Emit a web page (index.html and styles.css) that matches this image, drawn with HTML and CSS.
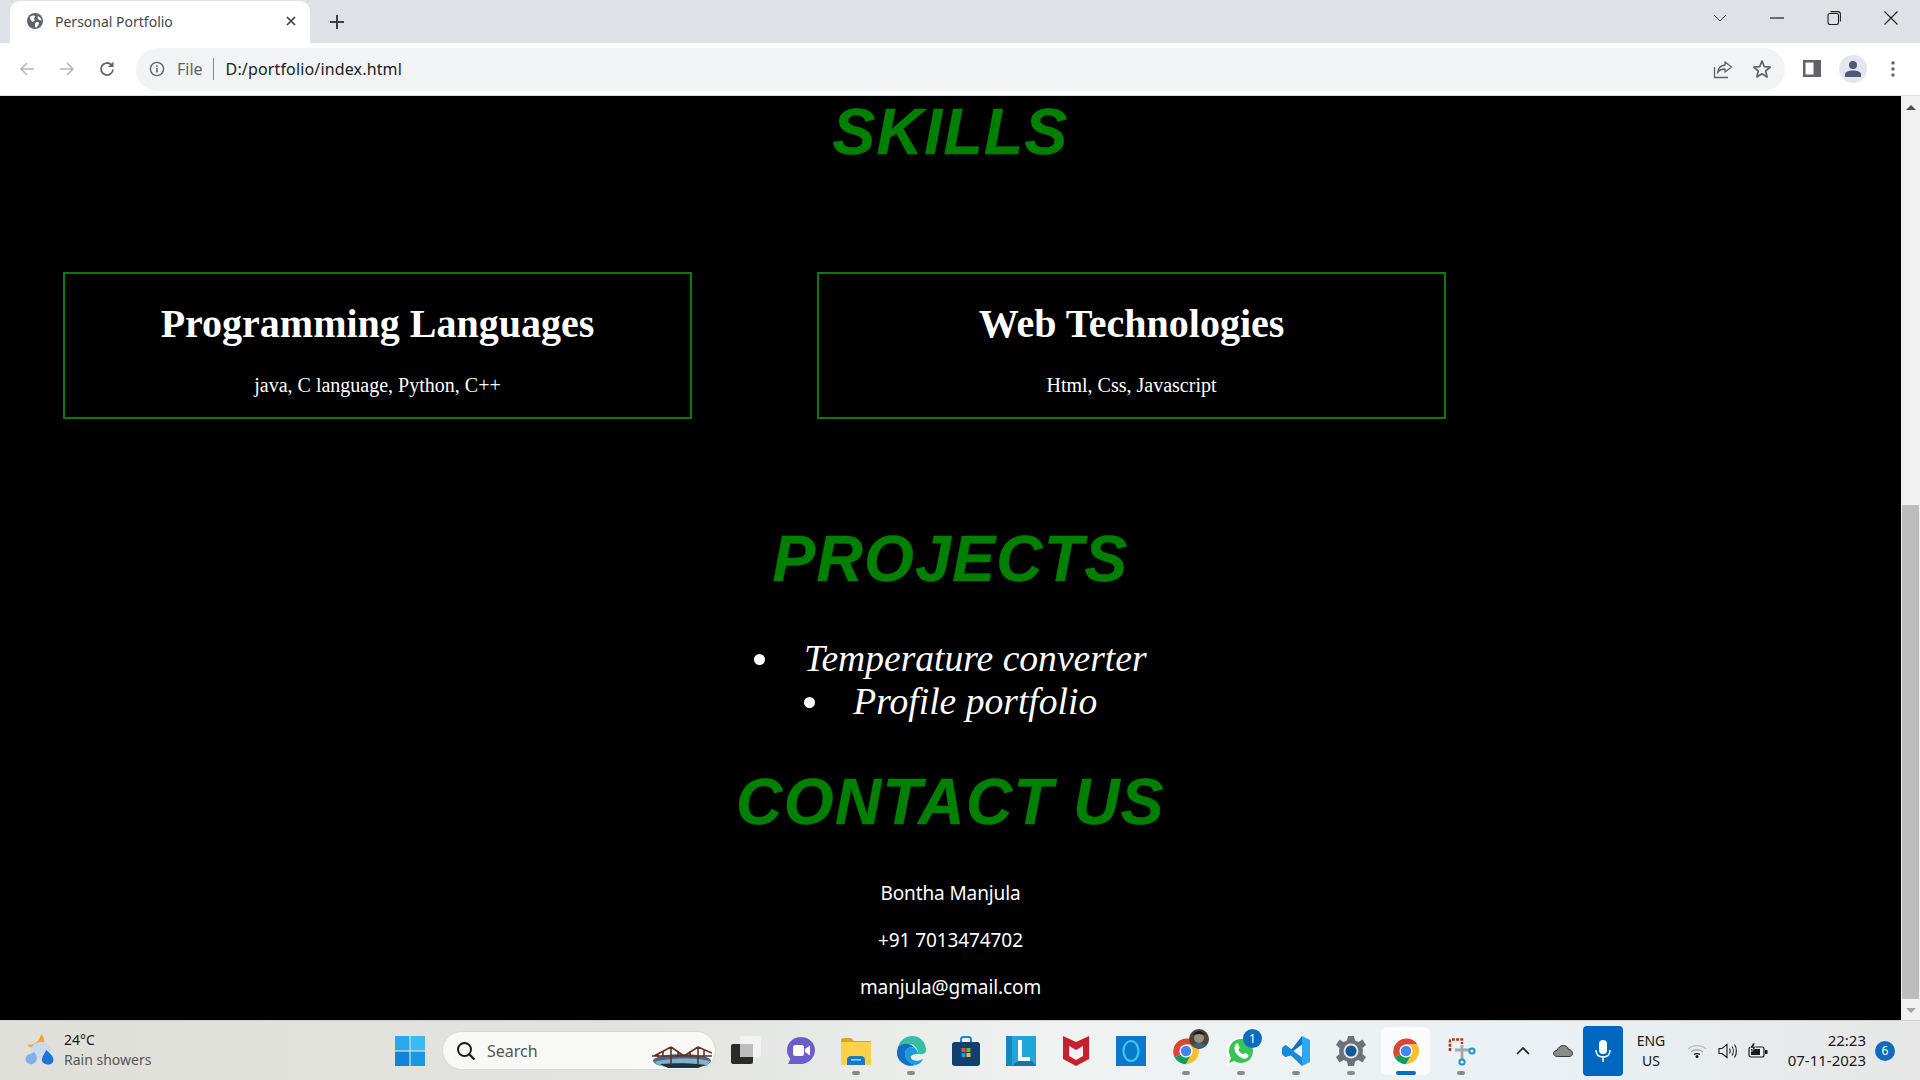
FILE: index.html
```html
<!DOCTYPE html>
<html lang="en">
<head>
    <meta charset="UTF-8">
    <title>Personal Portfolio</title>
    <link rel="stylesheet" href="styles.css">
</head>

<body>
    <svg class="defs" width="0" height="0">
        <symbol id="chrome" viewBox="0 0 32 32">
            <path fill="#db4437" d="M3.9 23A14 14 0 0 1 28.1 9H16L9.9 19.5Z"/>
            <path fill="#0f9d58" d="M3.9 23L9.9 19.5H22L16 30A14 14 0 0 1 3.9 23Z"/>
            <path fill="#fbc02d" d="M28.1 9A14 14 0 0 1 16 30L22 19.5L16 9Z"/>
            <circle cx="16" cy="16" r="7" fill="#fff"/>
            <circle cx="16" cy="16" r="5.6" fill="#4285f4"/>
        </symbol>
    </svg>

    <!-- browser tabs -->
    <div class="tab-strip">
        <div class="tab">
            <svg class="favicon" viewBox="0 0 16 16"><circle cx="8" cy="8" r="8" fill="#5f6368"/><path fill="#fff" d="M3 3.5L6.5 2.2L8.5 3.5L7 5.5L7.8 7.5L5.5 9L3.2 6.5ZM9 9L12 9.5L11.5 12L9.5 14.5L8 14L8 11ZM11 3L14 5.5L14.5 7.5L12 7L10.5 5Z"/></svg>
            <span class="tab-title">Personal Portfolio</span>
            <svg class="tab-close" viewBox="0 0 10 10"><path d="M1 1L9 9M9 1L1 9" stroke="#3c4043" stroke-width="1.7"/></svg>
        </div>
        <svg class="new-tab" viewBox="0 0 14 14"><path d="M7 0V14M0 7H14" stroke="#3c4043" stroke-width="2"/></svg>
        <div class="win-controls">
            <div class="win-btn"><svg width="14" height="8" viewBox="0 0 14 8"><path d="M1 1L7 7L13 1" fill="none" stroke="#3c4043"/></svg></div>
            <div class="win-btn"><svg width="14" height="2" viewBox="0 0 14 2"><path d="M0 1H14" stroke="#1f1f1f" stroke-width="1.2"/></svg></div>
            <div class="win-btn"><svg width="14" height="14" viewBox="0 0 14 14"><rect x="1" y="2.5" width="10.5" height="11" rx="2" fill="none" stroke="#1f1f1f" stroke-width="1.1"/><path d="M3.5 .6H11A2.4 2.4 0 0 1 13.4 3V10.5" fill="none" stroke="#1f1f1f" stroke-width="1.1"/></svg></div>
            <div class="win-btn"><svg width="14" height="14" viewBox="0 0 14 14"><path d="M.5 .5L13.5 13.5M13.5 .5L.5 13.5" stroke="#1f1f1f" stroke-width="1.1"/></svg></div>
        </div>
    </div>

    <!-- address bar -->
    <div class="toolbar">
        <div class="tool-btn"><svg width="16" height="16" viewBox="0 0 16 16"><path d="M15 8H2M8 2L2 8L8 14" fill="none" stroke="#b4b7bb" stroke-width="1.6"/></svg></div>
        <div class="tool-btn"><svg width="16" height="16" viewBox="0 0 16 16"><path d="M1 8H14M8 2L14 8L8 14" fill="none" stroke="#b4b7bb" stroke-width="1.6"/></svg></div>
        <div class="tool-btn"><svg width="18" height="18" viewBox="0 0 18 18"><path d="M15 9.5A6 6 0 1 1 13.2 4.7" fill="none" stroke="#5f6368" stroke-width="1.8"/><path d="M15.5 1.5V7H10Z" fill="#5f6368"/></svg></div>
        <div class="omnibox">
            <svg class="info-icon" viewBox="0 0 16 16"><circle cx="8" cy="8" r="6.6" fill="none" stroke="#5f6368" stroke-width="1.4"/><path d="M8 7V11.6M8 4.2V5.8" stroke="#5f6368" stroke-width="1.6"/></svg>
            <span class="scheme">File</span>
            <span class="url">D:/portfolio/index.html</span>
            <svg class="share-icon" viewBox="0 0 20 20"><path d="M1.5 8V18.5H15" fill="none" stroke="#5f6368" stroke-width="1.3"/><path d="M12 3L18.5 8L12 13V10C8.5 10 6 11 4.5 14C5 9.5 7.5 6.5 12 6Z" fill="none" stroke="#5f6368" stroke-width="1.3" stroke-linejoin="round"/></svg>
            <svg class="star-icon" viewBox="0 0 20 20"><path d="M10 2L12.3 7.6L18.3 8.1L13.7 12L15.1 17.9L10 14.8L4.9 17.9L6.3 12L1.7 8.1L7.7 7.6Z" fill="none" stroke="#5f6368" stroke-width="1.7" stroke-linejoin="round"/></svg>
        </div>
        <div class="tool-btn first-right"><svg width="18" height="18" viewBox="0 0 18 18"><path fill="#5f6368" fill-rule="evenodd" d="M0 0H18V17H0ZM2.5 2.5V14.5H10.5V2.5Z"/></svg></div>
        <div class="tool-btn"><div class="avatar"><svg width="18" height="18" viewBox="0 0 18 18"><circle cx="9" cy="5" r="4" fill="#4a5a78"/><path fill="#4a5a78" d="M1 17V14.5C1 11.5 5 10.5 9 10.5S17 11.5 17 14.5V17Z"/></svg></div></div>
        <div class="tool-btn"><svg width="4" height="16" viewBox="0 0 4 16"><circle cx="2" cy="2" r="1.7" fill="#5f6368"/><circle cx="2" cy="8" r="1.7" fill="#5f6368"/><circle cx="2" cy="14" r="1.7" fill="#5f6368"/></svg></div>
    </div>

    <!-- the page itself -->
    <div class="viewport">
        <div class="page">
            <h1 class="section-title skills-title">SKILLS</h1>
            <div class="skills">
                <div class="skill-card">
                    <h2>Programming Languages</h2>
                    <p>java, C language, Python, C++</p>
                </div>
                <div class="skill-card">
                    <h2>Web Technologies</h2>
                    <p>Html, Css, Javascript</p>
                </div>
            </div>

            <h1 class="section-title projects-title">PROJECTS</h1>
            <ul class="projects">
                <li>Temperature converter</li>
                <li>Profile portfolio</li>
            </ul>

            <h1 class="section-title contact-title">CONTACT US</h1>
            <div class="contact">
                <p>Bontha Manjula</p>
                <p>+91 7013474702</p>
                <p>manjula@gmail.com</p>
            </div>
        </div>
        <div class="scrollbar">
            <div class="arrow-up"></div>
            <div class="thumb"></div>
            <div class="arrow-down"></div>
        </div>
    </div>

    <!-- windows taskbar -->
    <div class="taskbar">
        <div class="weather">
            <svg class="weather-icon" viewBox="0 0 30 32">
                <path fill="#f5a623" d="M16 0C21 5 20 12 14 14C10 15 5 14 2 11C8 11 15 8 16 0Z"/>
                <ellipse cx="16" cy="16" rx="10" ry="8" fill="#c9d9ee"/>
                <path fill="#7fb2e6" d="M9 18C13 22 13 28 8 30C3 31 -1 27 1 23C2 20 6 20 9 18Z"/>
                <path fill="#1f74d4" d="M21 16C26 20 30 24 28 28C26 32 18 31 17 27C16 23 20 20 21 16Z"/>
            </svg>
            <div class="weather-text">
                <div class="temp">24°C</div>
                <div class="sky">Rain showers</div>
            </div>
        </div>

        <div class="app">
            <svg class="icon" viewBox="0 0 30 30">
                <rect x="0" y="0" width="14.4" height="14.4" fill="#29a8ea"/><rect x="15.6" y="0" width="14.4" height="14.4" fill="#3bbcf0"/>
                <rect x="0" y="15.6" width="14.4" height="14.4" fill="#1283d8"/><rect x="15.6" y="15.6" width="14.4" height="14.4" fill="#1a96e2"/>
            </svg>
        </div>

        <div class="search">
            <svg class="search-icon" viewBox="0 0 20 20"><circle cx="8.5" cy="8.5" r="6.5" fill="none" stroke="#1a1a1a" stroke-width="2"/><path d="M13 13L18.5 18.5" stroke="#1a1a1a" stroke-width="2.2"/></svg>
            <span class="search-text">Search</span>
            <svg class="bridge" viewBox="0 0 60 24">
                <ellipse cx="30" cy="17" rx="29" ry="7" fill="#40688f"/>
                <path d="M2 18C14 14 44 13 58 17L55 22H8Z" fill="#7fb3c8"/>
                <path d="M8 20C22 19 40 19 54 21L46 24H16Z" fill="#1d3142"/>
                <path d="M0 12H60M19 3V21M46 3V21M19 3L2 12M19 3L32 12M46 3L32 12M46 3L60 9M6 10V13M11 8V13M26 7V13M38 7V13M52 6V13" fill="none" stroke="#6b2f1f" stroke-width="1.6"/>
            </svg>
        </div>

        <div class="app">
            <svg class="icon" viewBox="0 0 30 30">
                <rect x="9" y="0" width="21" height="21" rx="2" fill="#f3f3f3"/>
                <rect x="0" y="8" width="22" height="20" rx="2" fill="#2a2a2a"/>
                <rect x="9" y="8" width="13" height="13" fill="#bdbdbd"/>
            </svg>
        </div>
        <div class="app">
            <svg class="icon" viewBox="0 0 30 30">
                <path fill="#6a5fc8" d="M15 1C23 1 29 7 29 14S23 28 15 28H2L4.5 23C2.5 21 1 18 1 14C1 7 7 1 15 1Z"/>
                <rect x="7" y="9" width="11" height="11" rx="2.5" fill="#fff"/>
                <path fill="#fff" d="M19 13L24 9.5V19.5L19 16Z"/>
            </svg>
        </div>
        <div class="app running">
            <svg class="icon" viewBox="0 0 30 30">
                <path fill="#d9a520" d="M0 4C0 3 1 2 2 2H10L13 5H30V12H0Z"/>
                <rect x="0" y="6" width="30" height="23" fill="#fbd14b"/>
                <path fill="#1978c8" d="M6 24C6 21 8 20 10 20H20C22 20 24 21 24 24V29H6Z"/>
                <rect x="10" y="23" width="10" height="1.6" fill="#8fd0f5"/>
            </svg>
        </div>
        <div class="app running">
            <svg class="icon" viewBox="0 0 30 30">
                <path fill="#35c1a1" d="M2 11C4 4 10 0 16 0C24 0 30 6 30 14C30 18 26 19 22 18C22 12 18 8 13 8C8 8 4 9 2 11Z"/>
                <path fill="#1170c5" d="M2 11C7 6 15 7 19 12C14 10 9 13 9 18C9 23 14 28 20 29C11 32 0 26 1 15Z"/>
                <path fill="#1a9be0" d="M9 18C9 13 14 10 19 12C21 14 22 16 22 18C18 18 14 19 15 22C16 25 22 26 27 23C25 27 23 28 20 29C14 28 9 23 9 18Z"/>
            </svg>
        </div>
        <div class="app">
            <svg class="icon" viewBox="0 0 30 30">
                <path fill="none" stroke="#1d88c7" stroke-width="2" d="M10 7V3.5C10 2 11 1 12.5 1H17.5C19 1 20 2 20 3.5V7"/>
                <rect x="1" y="6" width="28" height="24" rx="3" fill="#113f70"/>
                <rect x="10.500" y="12" width="4" height="4" fill="#f25022"/><rect x="15.500" y="12" width="4" height="4" fill="#7fba00"/>
                <rect x="10.500" y="17" width="4" height="4" fill="#00a4ef"/><rect x="15.500" y="17" width="4" height="4" fill="#ffb900"/>
            </svg>
        </div>
        <div class="app">
            <svg class="icon" viewBox="0 0 30 30">
                <rect width="30" height="30" fill="#1fa7d9"/>
                <path fill="#0c6fa8" d="M0 0H6V30H0Z" opacity=".6"/>
                <path fill="#fff" d="M12 4H16V21H24V25H12Z"/>
                <path fill="#0f5e92" d="M12 25H26L30 30H6Z" opacity=".7"/>
            </svg>
        </div>
        <div class="app">
            <svg class="icon" viewBox="0 0 30 30">
                <path fill="#c8202f" d="M0 0L15 6L30 0V23L15 30L0 23ZM7 10V20L15 24L23 20V10L15 14Z" transform="translate(2 0) scale(.87 1)"/>
            </svg>
        </div>
        <div class="app">
            <svg class="icon" viewBox="0 0 30 30">
                <rect width="30" height="30" fill="#0b78c9"/>
                <ellipse cx="15" cy="15" rx="7.5" ry="10" fill="none" stroke="#38c6f4" stroke-width="2.2"/>
            </svg>
        </div>
        <div class="app running">
            <svg class="icon" viewBox="0 0 32 32"><use href="#chrome"/></svg>
            <svg class="photo-badge" viewBox="0 0 20 20">
                <circle cx="10" cy="10" r="10" fill="#4a4640"/>
                <circle cx="10" cy="9" r="5" fill="#9a8f80"/>
                <path fill="#3f5f88" d="M3 17C5 13 15 13 17 17L10 20Z"/>
                <path fill="#1f1c18" d="M4 6C6 1 14 1 16 6L10 5Z"/>
            </svg>
        </div>
        <div class="app running">
            <svg class="icon" viewBox="0 0 30 30">
                <path fill="#fff" d="M15 1C23 1 29 7 29 15S23 29 15 29C12 29 10 28 8 27L0 30L3 22C2 20 1 18 1 15C1 7 7 1 15 1Z"/>
                <path fill="#37c456" d="M15 3C22 3 27 8 27 15S22 27 15 27C12 27 10 26 8 25L3 27L5 22C4 20 3 18 3 15C3 8 8 3 15 3Z"/>
                <path fill="#fff" d="M10 8C11 7 12 7 12.5 8.5L13.5 11C14 12 12.5 13 12.5 14C13.5 16 15 17.5 17 18C18 18 18.5 16.5 19.5 17L22 18.5C23 19 22.5 21 21 22C19 23.5 15 22.5 11.5 19C8 15.5 7.5 11 10 8Z"/>
            </svg>
            <span class="count-badge">1</span>
        </div>
        <div class="app running">
            <svg class="icon" viewBox="0 0 30 30">
                <path fill="#0c74bf" d="M21 0V8.5L4.5 21L1 18L7 15L1 12L4.5 9L10.5 13.5Z"/>
                <path fill="#1b8ad6" d="M4.5 9L21 21.5V30L10 19.5L4.5 21L1 18V12Z"/>
                <path fill="#2aa7f5" d="M21 0L29 4V26L21 30Z"/>
            </svg>
        </div>
        <div class="app running">
            <svg class="icon" viewBox="0 0 30 30">
                <path fill="#6e7278" d="M12 0H18L19 4.5L22.5 6L26.5 3.5L30 9L26.5 12C27 13.5 27 16.5 26.5 18L30 21L26.5 26.5L22.5 24L19 25.5L18 30H12L11 25.5L7.5 24L3.5 26.5L0 21L3.500 18C3 16.5 3 13.5 3.5 12L0 9L3.5 3.5L7.5 6L11 4.5Z"/>
                <circle cx="15" cy="15" r="7.5" fill="#dfe3ea"/>
                <circle cx="15" cy="15" r="5.5" fill="#11589e"/>
            </svg>
        </div>
        <div class="app running active">
            <svg class="icon" viewBox="0 0 32 32"><use href="#chrome"/></svg>
        </div>
        <div class="app running">
            <svg class="icon" viewBox="0 0 30 30">
                <path d="M4 15V5C4 4 5 3.500 6 3.500H16V8" fill="none" stroke="#b5371f" stroke-width="2.600" stroke-dasharray="3 1.200"/>
                <path d="M9 14H24M16 9V23" fill="none" stroke="#a3a7ab" stroke-width="2.800"/>
                <circle cx="26" cy="15" r="2.600" fill="#fff" stroke="#1a90d9" stroke-width="2"/>
                <circle cx="16" cy="26" r="2.600" fill="#fff" stroke="#1a90d9" stroke-width="2"/>
            </svg>
        </div>

        <div class="tray">
            <div class="tray-item chevron"><svg width="14" height="8" viewBox="0 0 14 8"><path d="M1 7L7 1L13 7" fill="none" stroke="#1a1a1a" stroke-width="1.6"/></svg></div>
            <div class="tray-item cloud"><svg width="20" height="12" viewBox="0 0 20 12"><path fill="#8a8a8a" stroke="#333" d="M4.5 11.5C2 11.5 .5 10 .5 8.5C.5 6.5 2 5.5 4 5.5C5 2.5 7.5 .5 10.5 .5C13 .5 15 2 15.5 4.5C18 4.5 19.5 6.5 19.5 8.5C19.5 10.5 18 11.5 16 11.5Z"/></svg></div>
            <div class="mic">
                <svg width="16" height="24" viewBox="0 0 16 24"><rect x="4" y="1" width="8" height="14" rx="4" fill="#fff"/><path d="M1 11C1 16 4 18 8 18S15 16 15 11M8 18V23" fill="none" stroke="#fff" stroke-width="1.5"/></svg>
            </div>
            <div class="lang"><div>ENG</div><div>US</div></div>
            <div class="tray-item wifi"><svg width="20" height="14" viewBox="0 0 20 14"><path d="M1 5C6 .5 14 .5 19 5" fill="none" stroke="#b9bcbc" stroke-width="1.3"/><path d="M4 8C7.5 5 12.5 5 16 8" fill="none" stroke="#a9acac" stroke-width="1.3"/><path d="M7 10.5C8.5 9.5 11.5 9.5 13 10.5" fill="none" stroke="#1a1a1a" stroke-width="1.3"/><circle cx="10" cy="12.500" r="1.500" fill="#1a1a1a"/></svg></div>
            <div class="tray-item volume"><svg width="20" height="16" viewBox="0 0 20 16"><path d="M1 5.5H4L9 1.5V14.5L4 10.5H1Z" fill="none" stroke="#1a1a1a" stroke-width="1.1"/><path d="M11.5 5.5C12.5 7 12.5 9 11.5 10.5M14 3.5C15.7 6 15.7 10 14 12.5M16.5 1.5C19 5 19 11 16.5 14.5" fill="none" stroke="#1a1a1a" stroke-width="1.1"/></svg></div>
            <div class="tray-item battery"><svg width="20" height="16" viewBox="0 0 20 16"><rect x="1" y="4" width="15" height="10" rx="2" fill="none" stroke="#1a1a1a" stroke-width="1.2"/><rect x="3" y="6" width="9" height="6" fill="#1a1a1a"/><rect x="17" y="7" width="2.500" height="4" fill="#1a1a1a"/><path d="M5 0L2 5H5L3.500 9L8 4H5.500L7 0Z" fill="#1a1a1a" stroke="#eef" stroke-width=".5"/></svg></div>
            <div class="clock"><div>22:23</div><div>07-11-2023</div></div>
            <div class="notif">6</div>
        </div>
    </div>
</body>
</html>
```

FILE: styles.css
```css
/* General Page Styling */
html, body {
    margin: 0;
    padding: 0;
    height: 100%;
    overflow: hidden;
    font-family: "Noto Sans", sans-serif;
}

body {
    display: flex;
    flex-direction: column;
}

.defs {
    position: absolute;
}

/* Tab strip */
.tab-strip {
    height: 43px;
    background: #dee1e6;
    display: flex;
    align-items: flex-end;
    flex-shrink: 0;
}

.tab {
    width: 300px;
    height: 42px;
    margin-left: 10px;
    background: #fff;
    border-radius: 10px 10px 0 0;
    display: flex;
    align-items: center;
    padding: 0 14px 2px 17px;
    box-sizing: border-box;
}

.favicon {
    width: 16px;
    height: 16px;
    margin-right: 12px;
}

.tab-title {
    flex: 1;
    font-size: 14px;
    color: #45474a;
}

.tab-close {
    width: 10px;
    height: 10px;
}

.new-tab {
    width: 14px;
    height: 14px;
    margin: 0 0 14px 20px;
}

.win-controls {
    display: flex;
    margin-left: auto;
    align-self: stretch;
}

.win-btn {
    width: 57px;
    display: flex;
    align-items: center;
    justify-content: center;
    padding-bottom: 7px;
    box-sizing: border-box;
}

.win-btn:last-child {
    width: 58px;
}

/* Address bar */
.toolbar {
    height: 52px;
    background: #fff;
    border-bottom: 1px solid #dadce0;
    display: flex;
    align-items: center;
    padding: 0 7px;
    flex-shrink: 0;
}

.tool-btn {
    width: 40px;
    display: flex;
    justify-content: center;
    align-items: center;
}

.first-right {
    width: 42px;
    margin-left: 6px;
}

.omnibox {
    flex: 1;
    height: 43px;
    margin-left: 9px;
    background: #f1f3f4;
    border-radius: 22px;
    display: flex;
    align-items: center;
    padding: 0 13px;
}

.info-icon {
    width: 16px;
    height: 16px;
    margin-right: 12px;
}

.scheme {
    font-size: 16px;
    color: #5f6368;
    padding-right: 10px;
    border-right: 1px solid #888;
    line-height: 22px;
    margin-right: 12px;
}

.url {
    font-size: 16px;
    letter-spacing: .15px;
    color: #202124;
}

.share-icon {
    width: 20px;
    height: 20px;
    margin-left: auto;
    margin-right: 19px;
}

.star-icon {
    width: 20px;
    height: 20px;
}

.avatar {
    width: 28px;
    height: 28px;
    border-radius: 50%;
    background: #e3e6ec;
    display: flex;
    align-items: center;
    justify-content: center;
}

/* Page area */
.viewport {
    flex: 1;
    display: flex;
    min-height: 0;
}

.page {
    flex: 1;
    background: #000;
    overflow: hidden;
    color: #fff;
    font-family: "Liberation Serif", serif;
}

.section-title {
    font-family: "Liberation Sans", sans-serif;
    font-style: italic;
    font-weight: 700;
    font-size: 64px;
    letter-spacing: 1.4px;
    line-height: 74px;
    color: #008000;
    -webkit-text-stroke: .4px #008000;
    text-align: center;
    margin: 0;
}

.skills-title {
    line-height: 72px;
}

.skills {
    display: flex;
    gap: 125px;
    padding-left: 63px;
    margin-top: 104px;
}

.skill-card {
    width: 629px;
    height: 147px;
    border: 2px solid #0a7a0a;
    box-sizing: border-box;
    text-align: center;
}

.skill-card h2 {
    font-size: 40px;
    line-height: 46px;
    margin: 27px 0 0;
}

.skill-card p {
    font-size: 20px;
    line-height: 23px;
    margin: 27px 0 0;
}

.projects-title {
    margin-top: 103px;
}

.projects {
    list-style-position: inside;
    text-align: center;
    font-style: italic;
    font-size: 37.6px;
    line-height: 43px;
    margin: 41px 0 0;
    padding: 0;
}

.contact-title {
    margin-top: 42px;
}

.contact {
    margin-top: 41px;
    text-align: center;
    font-family: "Noto Sans", sans-serif;
    font-size: 19px;
    letter-spacing: -.1px;
    line-height: 27px;
}

.contact p {
    margin: 0 0 20px;
}

.scrollbar {
    width: 19px;
    background: #f1f1f1;
    display: flex;
    flex-direction: column;
    align-items: center;
}

.arrow-up {
    margin-top: 9px;
    border: 5px solid transparent;
    border-top: 0;
    border-bottom: 5px solid #505050;
}

.thumb {
    width: 17px;
    height: 494px;
    background: #bdbdbd;
    margin-top: 395px;
}

.arrow-down {
    margin-top: 9px;
    border: 5px solid transparent;
    border-bottom: 0;
    border-top: 5px solid #a3a3a3;
}

/* Taskbar */
.taskbar {
    height: 60px;
    flex-shrink: 0;
    background: linear-gradient(90deg, #e0e0da 0%, #e3e4e0 35%, #eff2f1 55%, #eaf1f4 80%, #e6e7e6 100%);
    border-top: 1px solid #cfcfcb;
    box-sizing: border-box;
    display: flex;
    align-items: center;
}

.weather {
    width: 382px;
    padding: 0 0 2px 25px;
    box-sizing: border-box;
    display: flex;
    align-items: center;
    gap: 9px;
}

.weather-icon {
    width: 30px;
    height: 32px;
}

.temp {
    font-size: 14px;
    line-height: 20px;
    color: #1a1a1a;
}

.sky {
    font-size: 14px;
    line-height: 20px;
    color: #555;
}

.app {
    width: 55px;
    height: 60px;
    flex-shrink: 0;
    display: flex;
    align-items: center;
    justify-content: center;
    position: relative;
    box-sizing: border-box;
}

.icon {
    width: 30px;
    height: 30px;
}

.running::after {
    content: "";
    position: absolute;
    left: 24px;
    bottom: 6px;
    width: 8px;
    height: 4px;
    border-radius: 2px;
    background: #8a8a8a;
}

.active {
    background: #fafbfb;
    background-clip: content-box;
    padding: 6px 3px;
    border-radius: 10px;
}

.active::after {
    left: 18px;
    width: 20px;
    background: #0f6cbd;
}

.search {
    width: 274px;
    height: 39px;
    margin: 0 2px 0 5px;
    flex-shrink: 0;
    background: #f8f8f7;
    border: 1px solid #d8d8d6;
    border-radius: 20px;
    box-sizing: border-box;
    display: flex;
    align-items: center;
    padding-left: 13px;
}

.search-icon {
    width: 20px;
    height: 20px;
}

.search-text {
    font-size: 16px;
    color: #555;
    margin-left: 11px;
}

.bridge {
    width: 60px;
    height: 24px;
    margin-left: auto;
    margin-right: 3px;
    margin-top: 10px;
}

.photo-badge {
    position: absolute;
    left: 31px;
    top: 8px;
    width: 20px;
    height: 20px;
}

.count-badge {
    position: absolute;
    left: 30px;
    top: 8px;
    width: 19px;
    height: 19px;
    border-radius: 50%;
    background: #0f6cbd;
    color: #fff;
    font-size: 12px;
    line-height: 19px;
    text-align: center;
}

.tray {
    width: 417px;
    margin-left: auto;
    flex-shrink: 0;
    display: flex;
    align-items: center;
    color: #1a1a1a;
}

.tray-item {
    display: flex;
    justify-content: center;
    align-items: center;
}

.chevron {
    width: 40px;
}

.cloud {
    width: 40px;
}

.mic {
    width: 40px;
    height: 50px;
    background: #0067c0;
    border-radius: 4px;
    display: flex;
    align-items: center;
    justify-content: center;
}

.lang {
    width: 56px;
    text-align: center;
    font-size: 14px;
    line-height: 20px;
}

.wifi {
    width: 36px;
}

.volume {
    width: 26px;
}

.battery {
    width: 34px;
}

.clock {
    width: 91px;
    padding-bottom: 2px;
    text-align: right;
    font-size: 15px;
    line-height: 20px;
}

.notif {
    width: 20px;
    height: 20px;
    margin-left: 9px;
    border-radius: 50%;
    background: #0f6cbd;
    color: #fff;
    font-size: 12px;
    line-height: 20px;
    text-align: center;
}
```
